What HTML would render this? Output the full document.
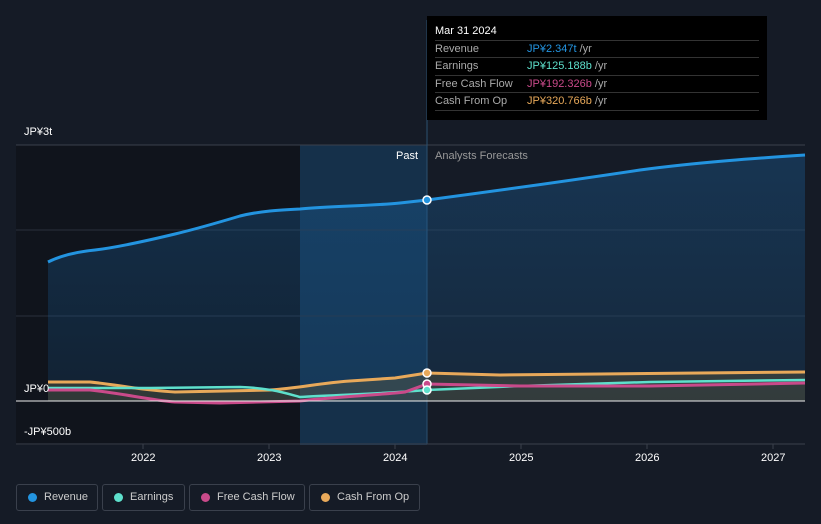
<!DOCTYPE html><html><head><style>
body{margin:0;width:821px;height:524px;background:#151b26;font-family:"Liberation Sans",sans-serif;overflow:hidden;position:relative}
.t{position:absolute;font-size:11px;color:#fff}
.tip{position:absolute;left:427px;top:16px;width:340px;height:104px;background:#000;}
.tip .h{position:absolute;left:8px;top:9px;color:#fff;font-size:11px}
.row{position:absolute;left:8px;width:324px;border-top:1px solid #333;height:17px;font-size:11px;line-height:17px;color:#aaa}
.row span{position:absolute;left:92px}
.lg{position:absolute;top:484px;height:27px;border:1px solid #3a404c;border-radius:3px;font-size:11px;color:#ccc;line-height:25px;box-sizing:border-box;padding-left:27px}
.lg i{position:absolute;left:11px;top:8px;width:9px;height:9px;border-radius:50%}
</style></head><body>
<svg width="821" height="524" style="position:absolute;left:0;top:0">
<defs><linearGradient id="g" x1="0" y1="0" x2="0" y2="1"><stop offset="0" stop-color="#1a5f9a" stop-opacity=".38"/><stop offset="1" stop-color="#1a5f9a" stop-opacity=".18"/></linearGradient></defs>
<rect x="16" y="145" width="284" height="300" fill="#10141c"/>
<rect x="300" y="145" width="127" height="300" fill="#15304a"/>
<line x1="16" y1="145" x2="805" y2="145" stroke="#3a404c"/>
<line x1="16" y1="230" x2="805" y2="230" stroke="#2a303c"/>
<line x1="16" y1="316" x2="805" y2="316" stroke="#2a303c"/>
<line x1="427" y1="20" x2="427" y2="444" stroke="#2a5070"/>
<path d="M48,262 C60,256 75,252 95,250 C120,247 150,240 175,234 C200,228 220,222 240,216 C260,211 280,210 300,209 C330,206 370,206 400,203 L427,200 C480,193 560,182 640,170 C700,162 760,158 805,155 L805,401 L48,401Z" fill="url(#g)"/>
<path d="M48,262 C60,256 75,252 95,250 C120,247 150,240 175,234 C200,228 220,222 240,216 C260,211 280,210 300,209 C330,206 370,206 400,203 L427,200 C480,193 560,182 640,170 C700,162 760,158 805,155" fill="none" stroke="#2394e0" stroke-width="3"/>
<path d="M48,382 L90,382 C120,385 140,390 175,392 L270,390 C300,388 320,383 350,381 L395,378 L427,373 L500,375 L600,374 L700,373 L805,372 L805,401 L48,401Z" fill="#6a6040" opacity=".35"/>
<path d="M48,382 L90,382 C120,385 140,390 175,392 L270,390 C300,388 320,383 350,381 L395,378 L427,373 L500,375 L600,374 L700,373 L805,372" fill="none" stroke="#e8a95a" stroke-width="3"/>
<path d="M48,388 L150,388 L240,387 C270,388 285,393 300,397 C330,395 380,394 427,390 L520,386 L650,382 L805,380" fill="none" stroke="#5ee0cc" stroke-width="2.5"/>
<path d="M48,390 L90,390 C120,393 150,400 175,402 L220,403 L300,401 C330,397 380,395 405,392 L427,384 L520,386 L650,386 L805,383" fill="none" stroke="#c94a8a" stroke-width="3"/>
<line x1="16" y1="401" x2="805" y2="401" stroke="#eee" stroke-width="1"/>
<line x1="16" y1="444" x2="805" y2="444" stroke="#3a404c"/>
<g stroke="#3a404c"><line x1="143" y1="444" x2="143" y2="449"/><line x1="269" y1="444" x2="269" y2="449"/><line x1="395" y1="444" x2="395" y2="449"/><line x1="521" y1="444" x2="521" y2="449"/><line x1="647" y1="444" x2="647" y2="449"/><line x1="773" y1="444" x2="773" y2="449"/></g>
<circle cx="427" cy="200" r="4" fill="#2394e0" stroke="#fff" stroke-width="1.5"/>
<circle cx="427" cy="373" r="4" fill="#e8a95a" stroke="#fff" stroke-width="1.5"/>
<circle cx="427" cy="384" r="4" fill="#c94a8a" stroke="#fff" stroke-width="1.5"/>
<circle cx="427" cy="390" r="4" fill="#5ee0cc" stroke="#fff" stroke-width="1.5"/>
</svg>
<div class="t" style="left:24px;top:126px">JP¥3t</div>
<div class="t" style="left:24px;top:383px">JP¥0</div>
<div class="t" style="left:24px;top:426px">-JP¥500b</div>
<div class="t" style="left:396px;top:150px;color:#fff">Past</div>
<div class="t" style="left:435px;top:150px;color:#999">Analysts Forecasts</div>
<div class="t" style="left:131px;top:452px">2022</div>
<div class="t" style="left:257px;top:452px">2023</div>
<div class="t" style="left:383px;top:452px">2024</div>
<div class="t" style="left:509px;top:452px">2025</div>
<div class="t" style="left:635px;top:452px">2026</div>
<div class="t" style="left:761px;top:452px">2027</div>
<div class="tip"><div class="h">Mar 31 2024</div>
<div class="row" style="top:24px">Revenue<span style="color:#2394e0">JP¥2.347t <b style="font-weight:normal;color:#aaa">/yr</b></span></div>
<div class="row" style="top:41px">Earnings<span style="color:#5ee0cc">JP¥125.188b <b style="font-weight:normal;color:#aaa">/yr</b></span></div>
<div class="row" style="top:59px">Free Cash Flow<span style="color:#c94a8a">JP¥192.326b <b style="font-weight:normal;color:#aaa">/yr</b></span></div>
<div class="row" style="top:76px;border-bottom:1px solid #333">Cash From Op<span style="color:#e8a95a">JP¥320.766b <b style="font-weight:normal;color:#aaa">/yr</b></span></div>
</div>
<div class="lg" style="left:16px;width:82px"><i style="background:#2394e0"></i>Revenue</div>
<div class="lg" style="left:102px;width:83px"><i style="background:#5ee0cc"></i>Earnings</div>
<div class="lg" style="left:189px;width:116px"><i style="background:#c94a8a"></i>Free Cash Flow</div>
<div class="lg" style="left:309px;width:111px"><i style="background:#e8a95a"></i>Cash From Op</div>
</body></html>
